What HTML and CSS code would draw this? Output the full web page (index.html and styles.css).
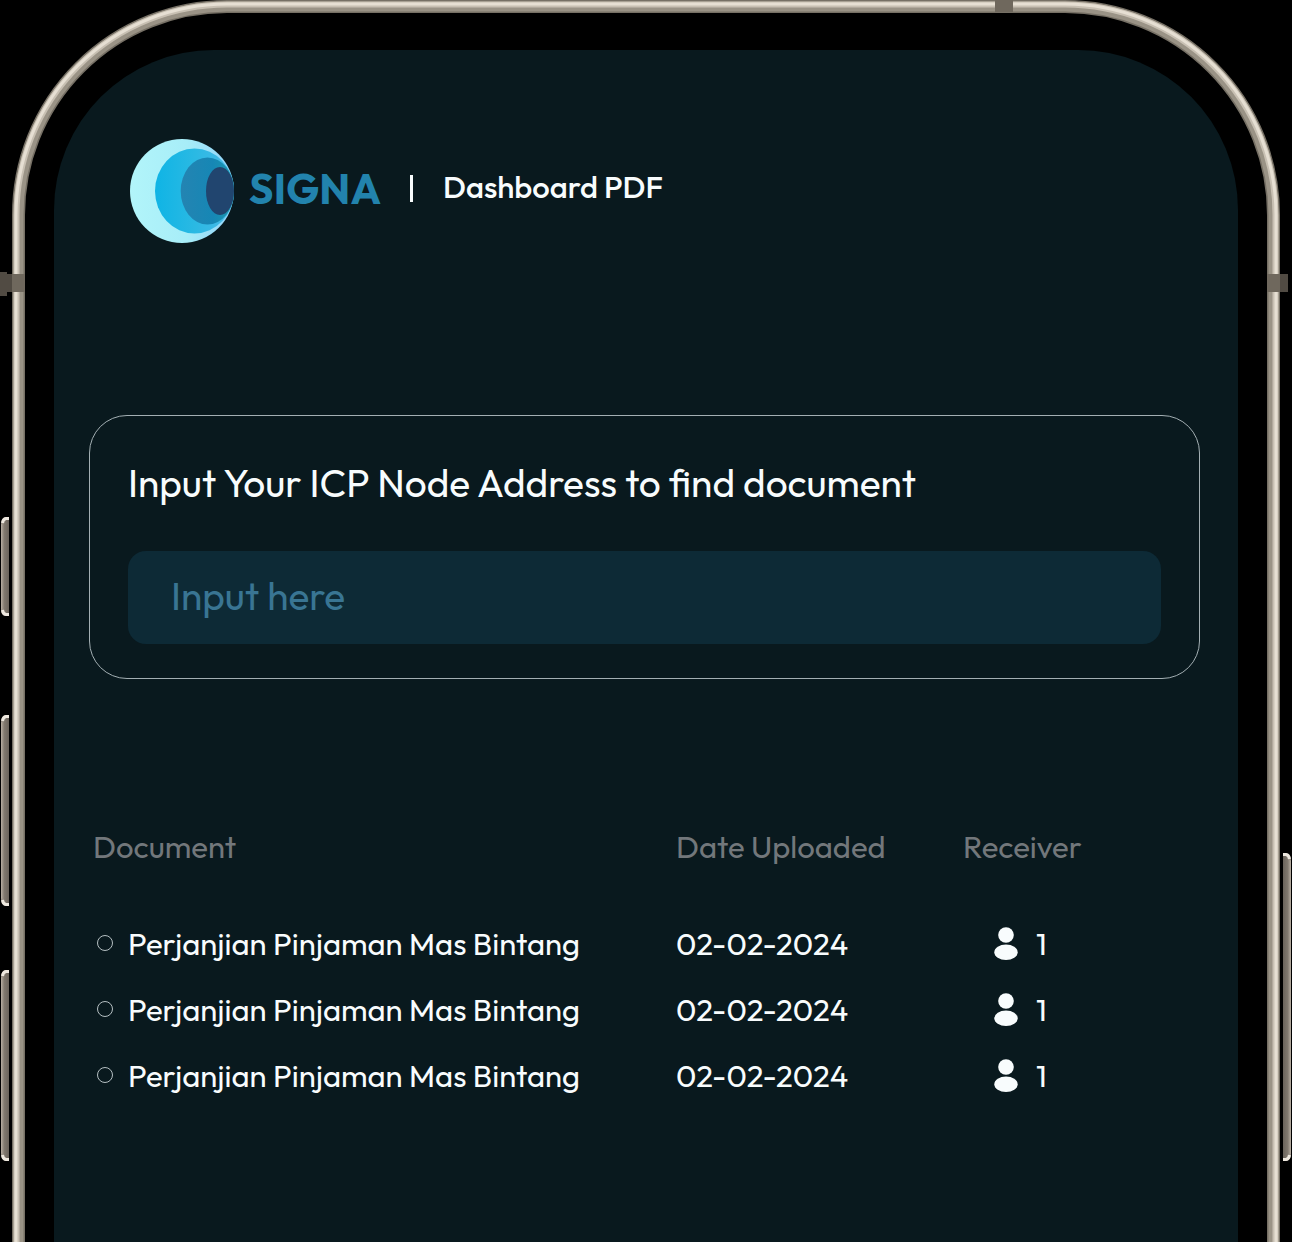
FILE: index.html
```html
<!DOCTYPE html>
<html lang="en">
<head>
<meta charset="utf-8">
<title>Signa – Dashboard PDF</title>
<link rel="stylesheet" href="styles.css">
</head>
<body>
<svg class="phone" viewBox="0 0 1292 1242" aria-hidden="true">
  <defs>
    <linearGradient id="btn" x1="0" x2="1" y1="0" y2="0"><stop offset="0" stop-color="#b9afa3"/><stop offset=".4" stop-color="#81796f"/><stop offset="1" stop-color="#6a635b"/></linearGradient>
    <linearGradient id="btnRight" x1="1" x2="0" y1="0" y2="0"><stop offset="0" stop-color="#b9afa3"/><stop offset=".4" stop-color="#81796f"/><stop offset="1" stop-color="#6a635b"/></linearGradient>
  </defs>
  <g fill="none">
    <rect x="18.5" y="6.5" width="1255" height="1700" rx="208.5" stroke="#767065" stroke-width="13"/>
    <rect x="18.5" y="6.5" width="1255" height="1700" rx="208.5" stroke="#9a9386" stroke-width="10"/>
    <rect x="16.5" y="4.5" width="1259" height="1700" rx="210.5" stroke="#c8c0b3" stroke-width="6"/>
    <rect x="16" y="4" width="1260" height="1700" rx="211" stroke="#e6dfd3" stroke-width="3"/>
  </g>
  <g fill="#6f685d">
    <path d="M995 0h18v12h-18zM12 274h13v18H12zM1267 274h13v18h-13z"/>
    <path d="M0 272h7v24H0zM7 274h5v18H7zM1280 274h8v18h-8z" fill="#514b43"/>
  </g>
  <g fill="url(#btn)">
    <path d="M9 517H5Q1 519 1 525V609Q1 615 5 616H9zM9 715H5Q1 717 1 723V898Q1 904 5 906H9zM9 970H5Q1 972 1 978V1153Q1 1159 5 1161H9z"/>
  </g>
  <path fill="url(#btnRight)" d="M1283 853H1286Q1291 855 1291 861V1153Q1291 1159 1287 1161H1283z"/>
  <g fill="none" stroke="#eee8df" stroke-width="3">
    <path d="M9 518.500H6Q3 519 2.500 523M9 614.500H6Q3 614 2.500 610M9 716.500H6Q3 717 2.500 721M9 904.500H6Q3 904 2.500 900M9 971.500H6Q3 972 2.500 976M9 1159.500H6Q3 1159 2.500 1155M1283 854.500H1286Q1289 855 1289.500 859M1283 1159.500H1286Q1289 1159 1289.500 1155"/>
  </g>
</svg>

<main class="screen">
  <header class="header">
    <svg class="logo" viewBox="0 0 104 104" aria-hidden="true">
      <defs>
        <linearGradient id="l1"><stop offset="0" stop-color="#b2f5fa"/><stop offset=".55" stop-color="#a7edf8"/><stop offset="1" stop-color="#8fd3fb"/></linearGradient>
        <linearGradient id="l2"><stop offset="0" stop-color="#0fb4e5"/><stop offset=".5" stop-color="#2ab9e3"/><stop offset="1" stop-color="#4bb9e8"/></linearGradient>
        <linearGradient id="l3"><stop offset="0" stop-color="#2484b2"/><stop offset=".6" stop-color="#1687b5"/><stop offset="1" stop-color="#1b9aae"/></linearGradient>
      </defs>
      <circle cx="52" cy="52" r="52" fill="url(#l1)"/>
      <ellipse cx="64.500" cy="52" rx="39.500" ry="42.500" fill="url(#l2)"/>
      <ellipse cx="77.500" cy="52" rx="26.800" ry="33.500" fill="url(#l3)"/>
      <ellipse cx="90" cy="52" rx="14" ry="24" fill="#21456f"/>
    </svg>
    <span class="brand">SIGNA</span>
    <span class="divider"></span>
    <h1 class="title">Dashboard PDF</h1>
  </header>

  <section class="search">
    <label class="search-label" for="node">Input Your ICP Node Address to find document</label>
    <div class="field" id="node">Input here</div>
  </section>

  <section class="documents">
    <div class="row head">
      <span class="h-doc">Document</span><span class="h-date">Date Uploaded</span><span class="h-rec">Receiver</span>
    </div>
    <div class="row">
      <span class="doc"><i class="radio"></i><span class="name">Perjanjian Pinjaman Mas Bintang</span></span>
      <span class="date">02-02-2024</span>
      <span class="receiver"><svg class="user" viewBox="0 0 24 34"><circle cx="12" cy="8" r="7.800"/><ellipse cx="12" cy="25.200" rx="11.700" ry="7.800"/></svg><span>1</span></span>
    </div>
    <div class="row">
      <span class="doc"><i class="radio"></i><span class="name">Perjanjian Pinjaman Mas Bintang</span></span>
      <span class="date">02-02-2024</span>
      <span class="receiver"><svg class="user" viewBox="0 0 24 34"><circle cx="12" cy="8" r="7.800"/><ellipse cx="12" cy="25.200" rx="11.700" ry="7.800"/></svg><span>1</span></span>
    </div>
    <div class="row">
      <span class="doc"><i class="radio"></i><span class="name">Perjanjian Pinjaman Mas Bintang</span></span>
      <span class="date">02-02-2024</span>
      <span class="receiver"><svg class="user" viewBox="0 0 24 34"><circle cx="12" cy="8" r="7.800"/><ellipse cx="12" cy="25.200" rx="11.700" ry="7.800"/></svg><span>1</span></span>
    </div>
  </section>
</main>
</body>
</html>
```
FILE: styles.css
```css
* { box-sizing: border-box; }

body {
  display: flow-root;
  margin: 0;
  height: 1242px;
  overflow: hidden;
  background: #000;
  color: #f8fcfd;
  font-family: Outfit, Lato, sans-serif;
  white-space: nowrap;
}

.phone {
  position: absolute;
  inset: 0;
  width: 1292px;
  height: 1242px;
}

.screen {
  position: relative;
  width: 1184px;
  height: 1192px;
  margin: 50px 0 0 54px;
  padding: 89px 38px 0 35px;
  border-radius: 160px 160px 0 0;
  background: #09191e;
}

.header {
  display: flex;
  align-items: center;
  height: 104px;
  padding-left: 41px;
}

.logo { width: 104px; height: 104px; }

.brand {
  width: 161px;
  padding: 0 0 6px 15px;
  color: #2283ad;
  font-size: 42px;
  font-weight: 700;
  letter-spacing: .2px;
}

.divider {
  width: 3px;
  height: 27px;
  margin: 0 30px 6px 15px;
  background: #f8fcfd;
}

.title {
  margin: 0;
  padding-bottom: 10px;
  font-size: 31px;
  font-weight: 500;
}

.search {
  height: 264px;
  margin-top: 172px;
  padding: 37px 38px 0;
  border: 1px solid #a3afb3;
  border-radius: 38px;
}

.search-label {
  display: block;
  height: 98px;
  font-size: 38.820px;
  line-height: 60px;
}

.field {
  height: 93px;
  padding-left: 43px;
  border-radius: 18px;
  background: #0d2a36;
  color: #397593;
  font-size: 38.820px;
  line-height: 90px;
}

.documents { margin-top: 134px; }

.row {
  display: grid;
  grid-template-columns: 587px 287px 1fr;
  height: 66px;
  align-items: center;
  font-size: 31.050px;
}

.head {
  margin-bottom: 31px;
  color: #72777b;
}

.h-doc { padding-left: 4px; }

.doc {
  display: flex;
  align-items: center;
}

.radio {
  width: 16px;
  height: 16px;
  margin: 0 15px 1px 8px;
  border: 1px solid #b5bfc2;
  border-radius: 50%;
}

.receiver {
  display: flex;
  align-items: center;
  gap: 18px;
  padding-left: 31px;
}

.user {
  width: 24px;
  height: 34px;
  margin-top: 2px;
  fill: #f8fcfd;
}
```
